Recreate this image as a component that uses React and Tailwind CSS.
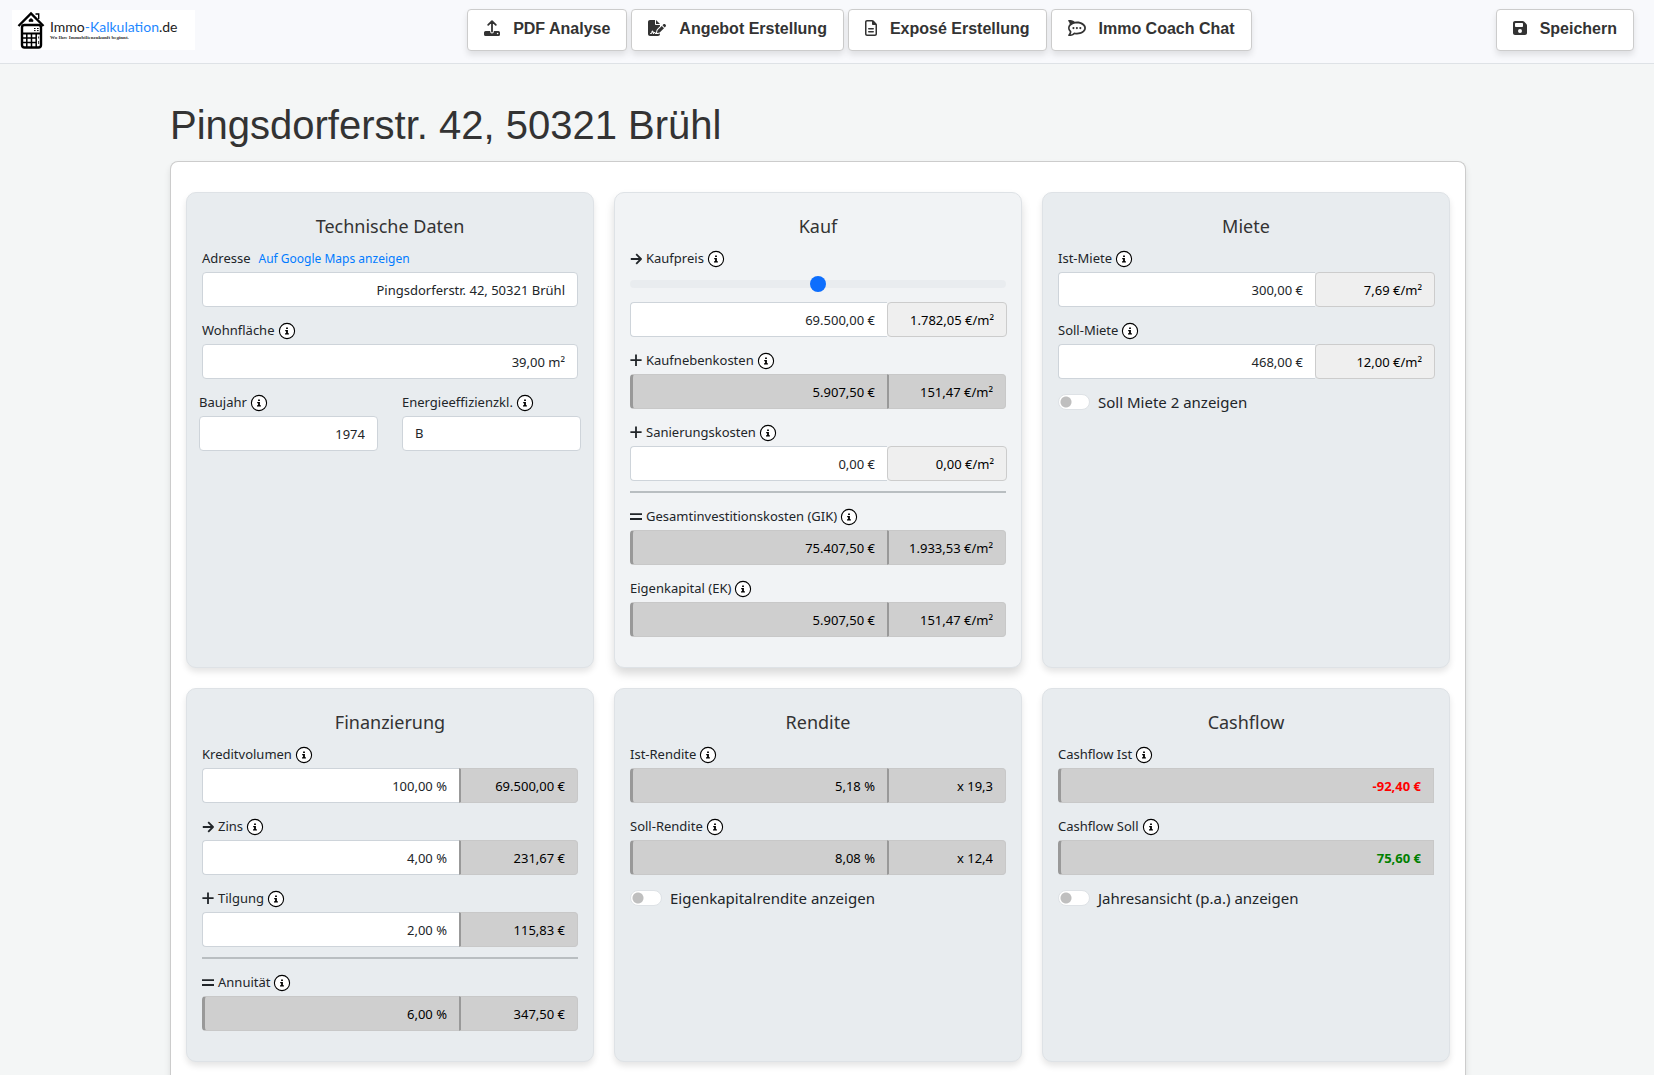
import { useState } from 'react'
import { FaFileSignature, FaRegFileLines, FaRocketchat, FaFloppyDisk } from 'react-icons/fa6'

// Rechenzeichen vor den Labels
const LABEL_ICONS = {
  arrow: 'M0.8 7h10M6.2 2.2 11 7l-4.8 4.8',
  plus: 'M6 0.4v11.6M0.4 6.2h11.2',
  equals: 'M0 4.2h12M0 9h12',
}

const FIELD = 'h-[35px] min-w-0 px-3 text-right text-[13px] outline-none'

function UploadIcon({ className }) {
  return (
    <svg viewBox="0 0 16 16" className={className} fill="none" stroke="currentColor" strokeWidth="1.8" aria-hidden="true">
      <path d="M8 11.5V1.4M4.2 4.8 8 1.1l3.8 3.7" strokeLinecap="round" strokeLinejoin="round" />
      <path
        d="M1.6 11h4.6v.7a1.8 1.8 0 0 0 3.6 0V11h4.6a1.6 1.6 0 0 1 1.6 1.6v1.8a1.6 1.6 0 0 1-1.6 1.6H1.6A1.6 1.6 0 0 1 0 14.4v-1.8A1.6 1.6 0 0 1 1.6 11Z"
        fill="currentColor"
        stroke="none"
      />
      <circle cx="13.6" cy="13.5" r="0.8" fill="#fff" stroke="none" />
    </svg>
  )
}

function InfoIcon() {
  return (
    <svg viewBox="0 0 16 16" className="size-4 shrink-0 overflow-visible" aria-hidden="true">
      <circle cx="8" cy="8" r="7.6" fill="#fff" stroke="#000" strokeWidth="1.1" />
      <path d="M7.1 4.4h1.8V6H7.1zM6.2 7h2.7v3.3h1v1.2H6v-1.2h1.1V8.2h-.9z" fill="#000" />
    </svg>
  )
}

function LogoMark() {
  return (
    <svg viewBox="0 0 28 38" className="h-[38px] w-7 shrink-0" fill="none" stroke="#000" aria-hidden="true">
      <path d="M1.5 15 14 2.5 26.5 15" strokeWidth="2.4" />
      <path d="M18.5 3h3.2v5" strokeWidth="1.4" />
      <path d="M12 10.5V9l2-1.6L16 9v1.5z" fill="#000" strokeWidth="0.6" />
      <rect x="5" y="14" width="19" height="22.5" rx="2.5" strokeWidth="2.4" />
      <path d="M5 22.5h19" strokeWidth="2" />
      <path d="M5 27h14M5 31.5h14M9.8 23v13M14.5 23v13M19.2 23v13" strokeWidth="1.5" />
      <path d="M17 17.5h1.6M20 17.5h1.6M17 19.6h1.6M20 19.6h1.6" strokeWidth="1" />
      <path d="M21.6 25.5v2M21.6 30v3" strokeWidth="0.8" />
    </svg>
  )
}

function NavButton({ icon: Icon, iconClass, children }) {
  return (
    <button
      type="button"
      className="flex h-[42px] items-center gap-[13px] rounded border border-[#ccc] bg-white px-4 pb-[3px] text-base font-bold whitespace-nowrap text-[#333] shadow-[0_4px_6px_rgba(0,0,0,0.1)]"
    >
      <Icon className={`mb-px h-4 ${iconClass}`} />
      {children}
    </button>
  )
}

function Panel({ title, light, children }) {
  return (
    <section
      className={`rounded-[10px] border border-[#dee2e6] px-[15px] pt-[15px] pb-[19px] ${
        light ? 'bg-[#f1f3f5] shadow-[0_6px_10px_rgba(0,0,0,0.15)]' : 'bg-[#e8ecef] shadow-[0_4px_6px_rgba(0,0,0,0.1)]'
      }`}
    >
      <h2 className="h-[38px] text-center text-lg leading-[36px] text-[#333]">{title}</h2>
      {children}
    </section>
  )
}

function FieldLabel({ id, icon, info = true, children }) {
  return (
    <div className="flex h-[26px] items-center gap-1 text-[13px]">
      {icon && (
        <svg viewBox="0 0 12 14" className="h-[14px] w-3 shrink-0" fill="none" stroke="currentColor" strokeWidth="1.8" aria-hidden="true">
          <path d={LABEL_ICONS[icon]} strokeLinejoin="round" />
        </svg>
      )}
      <label htmlFor={id}>{children}</label>
      {info && <InfoIcon />}
    </div>
  )
}

// tone: 'input' = editierbar, 'calc' = berechneter Wert
function PairField({ id, label, icon, tone = 'input', value, side, sideTone = 'calc', children }) {
  return (
    <div className="mb-[11px]">
      <FieldLabel id={id} icon={icon}>{label}</FieldLabel>
      {children}
      <div className="flex">
        <input
          id={id}
          defaultValue={value}
          readOnly={tone === 'calc'}
          className={`${FIELD} flex-1 rounded-l border ${
            tone === 'calc'
              ? 'border-[#c8c8c8] border-r-0 border-l-[3px] border-l-[#999] bg-[#cfcfcf] text-black'
              : 'border-[#ced4da] border-r-0 bg-white text-[#212529]'
          }`}
        />
        <input
          aria-label={`${label} Nebenwert`}
          defaultValue={side}
          readOnly
          className={`${FIELD} border text-black ${
            sideTone === 'plain'
              ? '-mr-px w-[120px] rounded border-[#ccc] bg-[#efefef]'
              : 'w-[119px] rounded-r border-[#c8c8c8] border-l-2 border-l-[#999] bg-[#cfcfcf]'
          }`}
        />
      </div>
    </div>
  )
}

function CashField({ id, label, value, color }) {
  return (
    <div className="mb-[11px]">
      <FieldLabel id={id}>{label}</FieldLabel>
      <input
        id={id}
        defaultValue={value}
        readOnly
        className={`${FIELD} w-full rounded-l border border-l-[3px] border-[#c8c8c8] border-l-[#999] bg-[#cfcfcf] font-bold ${color}`}
      />
    </div>
  )
}

function Toggle({ id, children }) {
  return (
    <div className="flex h-6 items-center gap-2">
      <input
        id={id}
        type="checkbox"
        role="switch"
        className="h-4 w-8 shrink-0 appearance-none rounded-full border border-[#dee2e6] bg-white bg-[radial-gradient(circle_at_7px_7px,#bfbfbf_5px,transparent_6px)] checked:bg-[#0d6efd]"
      />
      <label htmlFor={id} className="text-[15px]">{children}</label>
    </div>
  )
}

const Divider = () => <hr className="-mt-px mb-[11px] border-t-2 border-[#b9bec1]" />

export default function App() {
  const [kaufpreis, setKaufpreis] = useState(69500)

  return (
    <div className="min-h-screen bg-[#f4f6f6] font-['Noto_Sans',sans-serif] text-[#212529]">
      <nav className="flex items-center border-b border-[#dee2e6] bg-[#f8f9fc] pt-[9px] pr-5 pb-3 pl-3 font-['Liberation_Sans',sans-serif]">
        <a href="#" className="mr-4 flex h-10 w-[183px] items-center gap-[5px] bg-white pl-[5px]">
          <LogoMark />
          <span className="flex flex-col pb-px">
            <span className="font-['Lato',sans-serif] text-sm leading-4 text-[#222]">
              Immo<span className="text-[#1e88ff]">-Kalkulation</span>.de
            </span>
            <span className="font-['Liberation_Serif',serif] text-[5px] leading-[6px] font-bold text-[#333]">
              Wo Ihre Immobilienzukunft beginnt.
            </span>
          </span>
        </a>
        <div className="mx-auto flex gap-1 pl-3">
          <NavButton icon={UploadIcon} iconClass="w-4">PDF Analyse</NavButton>
          <NavButton icon={FaFileSignature} iconClass="w-[18px]">Angebot Erstellung</NavButton>
          <NavButton icon={FaRegFileLines} iconClass="w-3">Exposé Erstellung</NavButton>
          <NavButton icon={FaRocketchat} iconClass="w-[18px]">Immo Coach Chat</NavButton>
        </div>
        <NavButton icon={FaFloppyDisk} iconClass="w-[14px]">Speichern</NavButton>
      </nav>

      <main className="pt-[37px] pr-[18px]">
        <div className="mx-auto max-w-[1296px]">
          <h1 className="mb-3 font-['Liberation_Sans',sans-serif] text-[40px] leading-[48px] text-[#333]">
            Pingsdorferstr. 42, 50321 Brühl
          </h1>

          <div className="grid grid-cols-3 gap-5 rounded-t-lg border border-b-0 border-[#ccc] bg-white px-[15px] pt-[30px] pb-5 shadow-[0_4px_6px_rgba(0,0,0,0.1)]">
            <Panel title="Technische Daten">
              <div className="mb-[11px]">
                <div className="flex items-center gap-2">
                  <FieldLabel id="adresse" info={false}>Adresse</FieldLabel>
                  <a href="#" className="text-xs text-[#007bff]">Auf Google Maps anzeigen</a>
                </div>
                <input id="adresse" defaultValue="Pingsdorferstr. 42, 50321 Brühl" className={`${FIELD} w-full rounded border border-[#ced4da] bg-white`} />
              </div>
              <div className="mb-[11px]">
                <FieldLabel id="wohnflaeche">Wohnfläche</FieldLabel>
                <input id="wohnflaeche" defaultValue="39,00 m²" className={`${FIELD} w-full rounded border border-[#ced4da] bg-white`} />
              </div>
              <div className="-mx-[3px] grid grid-cols-2 gap-6">
                <div>
                  <FieldLabel id="baujahr">Baujahr</FieldLabel>
                  <input id="baujahr" defaultValue="1974" className={`${FIELD} w-full rounded border border-[#ced4da] bg-white`} />
                </div>
                <div>
                  <FieldLabel id="energie">Energieeffizienzkl.</FieldLabel>
                  <select id="energie" defaultValue="B" className="h-[35px] w-full appearance-none rounded border border-[#ced4da] bg-white px-3 text-[13px]">
                    <option>A</option>
                    <option>B</option>
                    <option>C</option>
                  </select>
                </div>
              </div>
            </Panel>

            <Panel title="Kauf" light>
              <PairField id="kaufpreis" label="Kaufpreis" icon="arrow" value="69.500,00 €" side="1.782,05 €/m²" sideTone="plain">
                <input
                  type="range"
                  aria-label="Kaufpreis Regler"
                  min="0"
                  max="139000"
                  step="500"
                  value={kaufpreis}
                  onChange={(e) => setKaufpreis(Number(e.target.value))}
                  className="mb-[6px] block h-6 w-full appearance-none bg-transparent [&::-webkit-slider-runnable-track]:h-2 [&::-webkit-slider-runnable-track]:rounded-full [&::-webkit-slider-runnable-track]:bg-[#e9ecef] [&::-webkit-slider-thumb]:-mt-1 [&::-webkit-slider-thumb]:size-4 [&::-webkit-slider-thumb]:appearance-none [&::-webkit-slider-thumb]:rounded-full [&::-webkit-slider-thumb]:bg-[#0d6efd]"
                />
              </PairField>
              <PairField id="nebenkosten" label="Kaufnebenkosten" icon="plus" tone="calc" value="5.907,50 €" side="151,47 €/m²" />
              <PairField id="sanierung" label="Sanierungskosten" icon="plus" value="0,00 €" side="0,00 €/m²" sideTone="plain" />
              <Divider />
              <PairField id="gik" label="Gesamtinvestitionskosten (GIK)" icon="equals" tone="calc" value="75.407,50 €" side="1.933,53 €/m²" />
              <PairField id="ek" label="Eigenkapital (EK)" tone="calc" value="5.907,50 €" side="151,47 €/m²" />
            </Panel>

            <Panel title="Miete">
              <PairField id="ist-miete" label="Ist-Miete" value="300,00 €" side="7,69 €/m²" sideTone="plain" />
              <PairField id="soll-miete" label="Soll-Miete" value="468,00 €" side="12,00 €/m²" sideTone="plain" />
              <Toggle id="miete2">Soll Miete 2 anzeigen</Toggle>
            </Panel>

            <Panel title="Finanzierung">
              <PairField id="kredit" label="Kreditvolumen" value="100,00 %" side="69.500,00 €" />
              <PairField id="zins" label="Zins" icon="arrow" value="4,00 %" side="231,67 €" />
              <PairField id="tilgung" label="Tilgung" icon="plus" value="2,00 %" side="115,83 €" />
              <Divider />
              <PairField id="annuitaet" label="Annuität" icon="equals" tone="calc" value="6,00 %" side="347,50 €" />
            </Panel>

            <Panel title="Rendite">
              <PairField id="ist-rendite" label="Ist-Rendite" tone="calc" value="5,18 %" side="x 19,3" />
              <PairField id="soll-rendite" label="Soll-Rendite" tone="calc" value="8,08 %" side="x 12,4" />
              <Toggle id="ek-rendite">Eigenkapitalrendite anzeigen</Toggle>
            </Panel>

            <Panel title="Cashflow">
              <CashField id="cf-ist" label="Cashflow Ist" value="-92,40 €" color="text-[#ff0000]" />
              <CashField id="cf-soll" label="Cashflow Soll" value="75,60 €" color="text-[#008000]" />
              <Toggle id="jahresansicht">Jahresansicht (p.a.) anzeigen</Toggle>
            </Panel>
          </div>
        </div>
      </main>
    </div>
  )
}
